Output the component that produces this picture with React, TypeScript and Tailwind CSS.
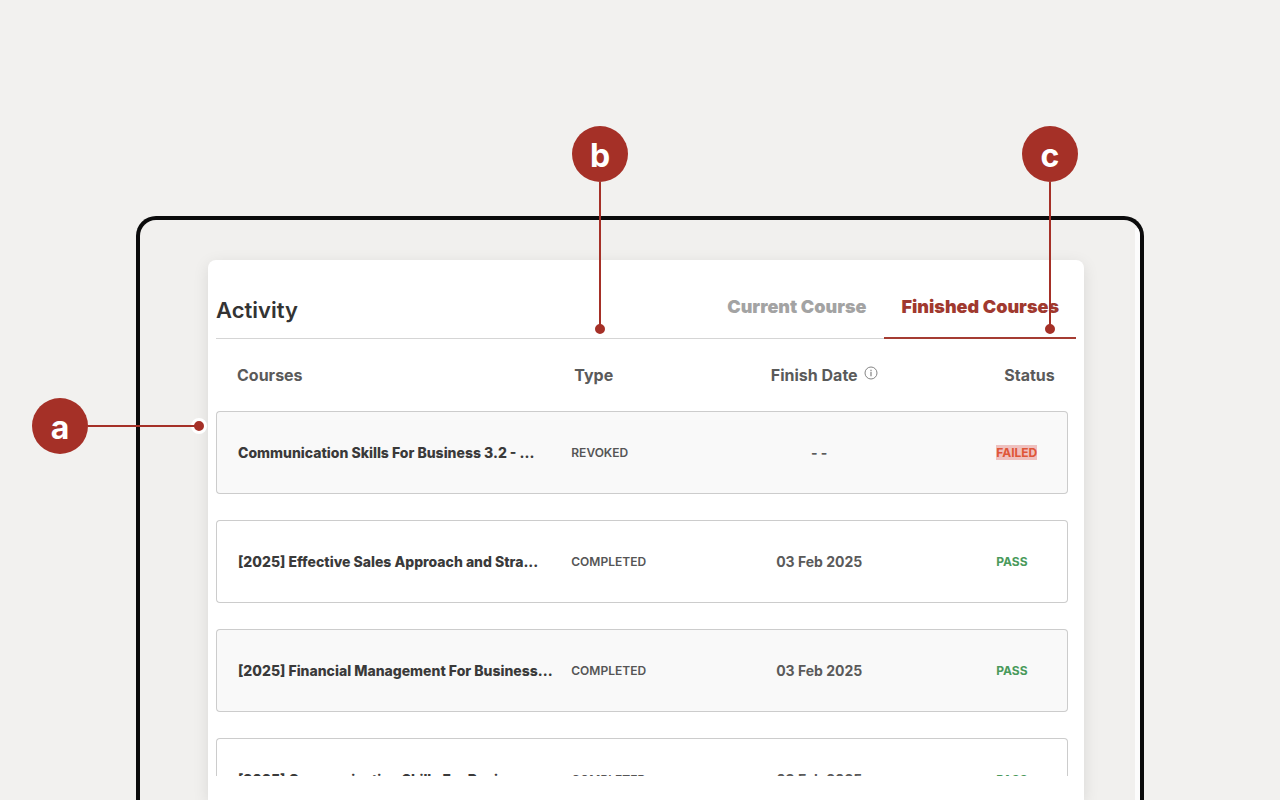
type Course = { title: string; type: string; date: string; status: "FAILED" | "PASS" };

const courses: Course[] = [
  { title: "Communication Skills For Business 3.2 - ...", type: "REVOKED", date: "- -", status: "FAILED" },
  { title: "[2025] Effective Sales Approach and Stra...", type: "COMPLETED", date: "03 Feb 2025", status: "PASS" },
  { title: "[2025] Financial Management For Business...", type: "COMPLETED", date: "03 Feb 2025", status: "PASS" },
  { title: "[2025] Communication Skills For Business...", type: "COMPLETED", date: "03 Feb 2025", status: "PASS" },
];

function InfoIcon() {
  return (
    <svg viewBox="0 0 14 14" className="mb-1 size-3.5 shrink-0" fill="none" stroke="#777777" aria-hidden="true">
      <circle cx="7" cy="7" r="6" strokeWidth="0.9" />
      <path d="M7 5.8v4.4" strokeWidth="1.1" />
      <path d="M7 3.7v1.2" strokeWidth="1.1" />
    </svg>
  );
}

function Badge({ letter }: { letter: string }) {
  return (
    <span className="flex size-14 shrink-0 items-center justify-center rounded-full bg-[#a53027] pt-1 text-[32px] leading-none font-bold text-white">
      {letter}
    </span>
  );
}

function Dot() {
  return <span className="size-4 shrink-0 rounded-full border-3 border-white bg-[#a53027]" />;
}

function VerticalCallout({ letter, place }: { letter: string; place: string }) {
  return (
    <div className={"absolute top-[126px] flex h-[211px] w-14 flex-col items-center " + place}>
      <Badge letter={letter} />
      <span className="z-10 -mb-1 w-0.5 flex-1 bg-[#a53027]" />
      <Dot />
    </div>
  );
}

function CourseRow({ course, shaded }: { course: Course; shaded: boolean }) {
  return (
    <tr className={"h-[83px] *:border-y *:border-[#cccccc] " + (shaded ? "*:bg-[#f9f9f9]" : "*:bg-white")}>
      <td className="rounded-l border-l pl-[21px] text-sm font-extrabold whitespace-nowrap text-[#3a3a3a]">
        {course.title}
      </td>
      <td className="text-xs font-semibold text-[#555555]">{course.type}</td>
      <td className="text-center text-sm font-bold text-[#5a5a5a]">{course.date}</td>
      <td className="rounded-r border-r pl-[68px] text-xs font-bold">
        {course.status === "FAILED" ? (
          <span className="bg-[#efc1bf] text-[#df5638]">FAILED</span>
        ) : (
          <span className="text-[#4a9a5b]">PASS</span>
        )}
      </td>
    </tr>
  );
}

export default function App() {
  return (
    <div className="relative flex h-screen flex-col overflow-hidden bg-[#f2f1ef] px-[136px] pt-[216px] font-['Inter',sans-serif]">
      <div className="flex min-h-0 flex-1 overflow-hidden rounded-t-[20px] border-4 border-b-0 border-[#0b0b0b] bg-[#f1f0ee]">
        <div className="flex min-w-0 flex-1 pt-10 pr-[51px] pl-[68px]">
          <main className="flex min-w-0 flex-1 flex-col rounded-t-lg bg-white px-2 shadow-[0_4px_16px_rgba(0,0,0,0.1)]">
            <header className="flex h-[79px] shrink-0 items-stretch justify-between border-b border-[#d5d5d5]">
              <h1 className="pt-9 text-[22px] leading-7 font-semibold text-[#333333]">Activity</h1>
              <nav className="-mb-px flex items-end text-lg leading-6 font-black">
                <button type="button" className="border-b-2 border-transparent px-[18px] pb-[18px] text-[#a3a3a3]">
                  Current Course
                </button>
                <button type="button" className="border-b-2 border-[#a53c32] px-[17px] pb-[18px] text-[#a0392f]">
                  Finished Courses
                </button>
              </nav>
            </header>
            <div className="mb-6 min-h-0 flex-1 overflow-hidden pr-2">
              <table className="w-full table-fixed border-separate border-spacing-x-0 border-spacing-y-[26px]">
                <colgroup>
                  <col className="w-[41.7%]" />
                  <col className="w-[16.3%]" />
                  <col className="w-[25.6%]" />
                  <col />
                </colgroup>
                <thead>
                  <tr className="h-5 text-left text-base leading-5 text-[#5a5a5a] *:font-bold">
                    <th className="pl-[21px]">Courses</th>
                    <th className="pl-[3px]">Type</th>
                    <th>
                      <span className="flex items-center justify-center gap-1.5 pl-2.5">
                        Finish Date <InfoIcon />
                      </span>
                    </th>
                    <th className="pl-[76px]">Status</th>
                  </tr>
                </thead>
                <tbody>
                  {courses.map((course, i) => (
                    <CourseRow key={course.title} course={course} shaded={i % 2 === 0} />
                  ))}
                </tbody>
              </table>
            </div>
          </main>
        </div>
        <div className="mt-2 w-[5px] bg-[#fcfcfc]" />
      </div>

      <div className="absolute top-[398px] left-8 flex w-[175px] items-center">
        <Badge letter="a" />
        <span className="z-10 -mr-1 h-0.5 flex-1 bg-[#a53027]" />
        <Dot />
      </div>
      <VerticalCallout letter="b" place="left-[572px]" />
      <VerticalCallout letter="c" place="left-[1022px]" />
    </div>
  );
}
